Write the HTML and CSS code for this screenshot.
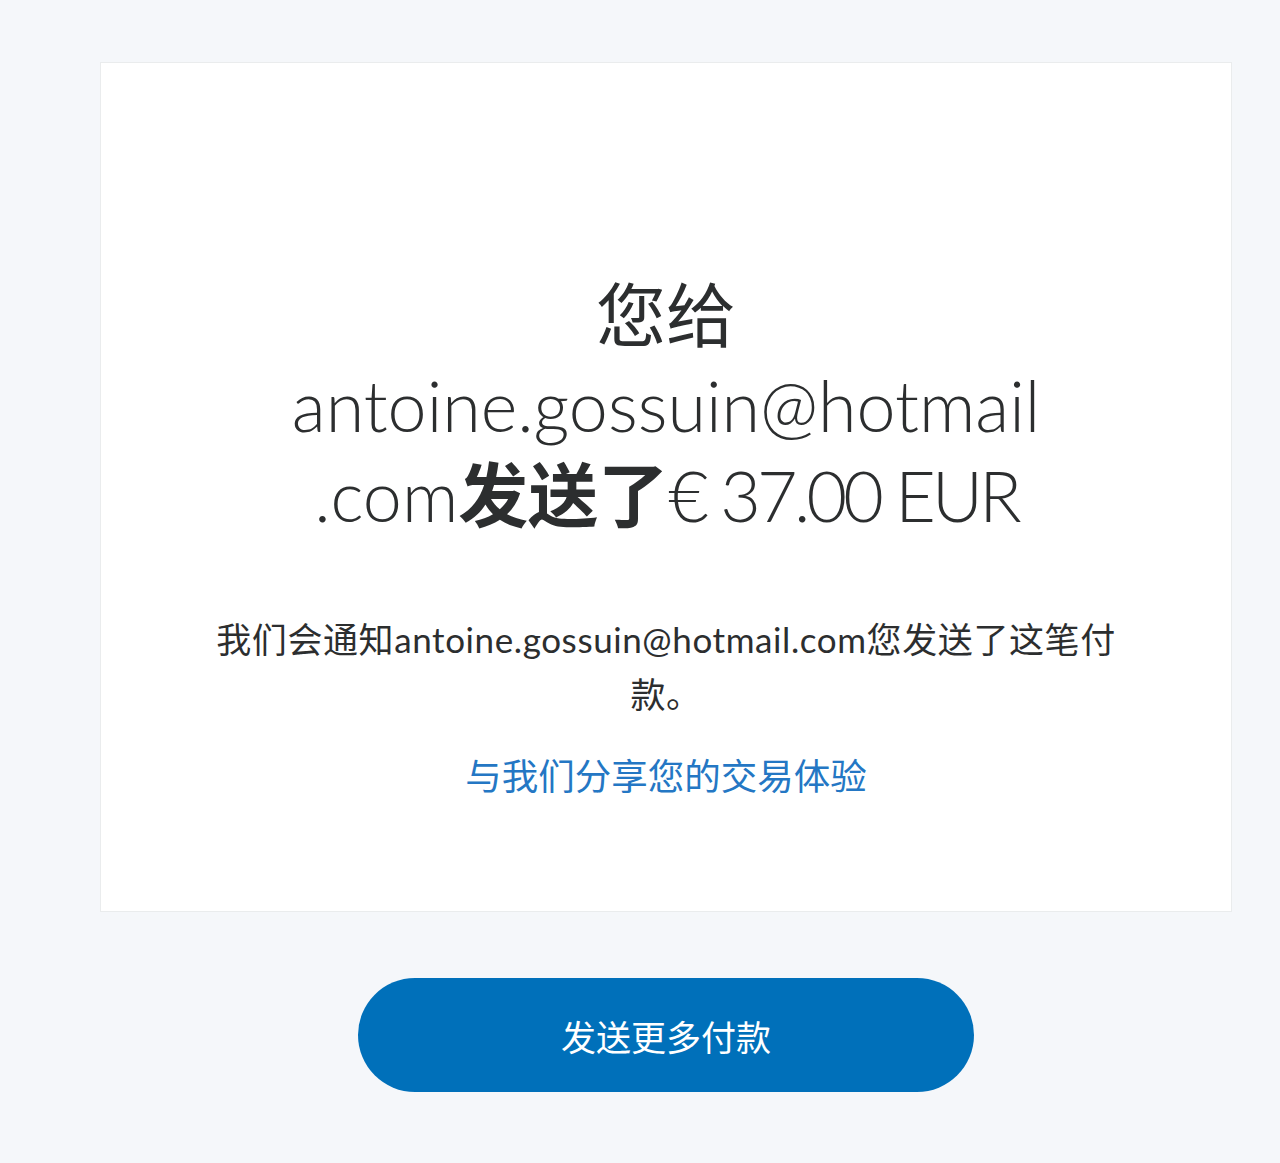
FILE: index.html
```html
<!DOCTYPE html>
<html lang="zh-CN">
<head>
    <meta charset="UTF-8">
    <meta name="viewport" content="width=device-width, initial-scale=1.0">
    <title>付款已发送</title>
    <link rel="stylesheet" href="styles.css">
</head>
<body>

    <div class="page">
        <!-- Confirmation card -->
        <div class="card">
            <h1 class="title">
                <span class="title-cjk">您给</span><br>antoine.gossuin@hotmail<br>.com<span class="title-strong">发送了</span><span class="amount">€ 37.00 EUR</span>
            </h1>
            <p class="notice">我们会通知antoine.gossuin@hotmail.com您发送了这笔付款。</p>
            <a class="feedback-link" href="#">与我们分享您的交易体验</a>
        </div>

        <div class="actions">
            <button type="button" class="btn-primary">发送更多付款</button>
        </div>
    </div>

</body>
</html>
```

FILE: styles.css
```css
body {
    font-family: Lato, "Noto Sans CJK SC", sans-serif;
    background-color: #f5f7fa;
    color: #2c2e2f;
    margin: 0;
    padding: 0;
}
.page {
    padding: 62px 0 70px 100px;
    width: 1132px;
}
.card {
    background-color: white;
    border: 1px solid #eaeced;
    box-sizing: border-box;
    height: 850px;
    padding: 207px 60px 0;
    text-align: center;
}
.title {
    font-size: 70px;
    font-weight: 300;
    line-height: 90px;
    margin: 0 0 72px;
}
.title-cjk {
    font-weight: 400;
}
.title-strong {
    font-weight: 700;
}
.amount {
    letter-spacing: -3.8px;
}
.notice {
    font-size: 35px;
    line-height: 55px;
    letter-spacing: 0.6px;
    margin: 0;
    padding: 0 40px;
}
.feedback-link {
    display: inline-block;
    margin-top: 27px;
    font-size: 36.5px;
    line-height: 55px;
    color: #2477c4;
    text-decoration: none;
}
.actions {
    display: flex;
    justify-content: center;
    padding-top: 66px;
}
.btn-primary {
    font-family: inherit;
    background-color: #0070ba;
    color: white;
    border: none;
    border-radius: 57px;
    width: 616px;
    height: 114px;
    font-size: 35px;
    cursor: pointer;
}
```
